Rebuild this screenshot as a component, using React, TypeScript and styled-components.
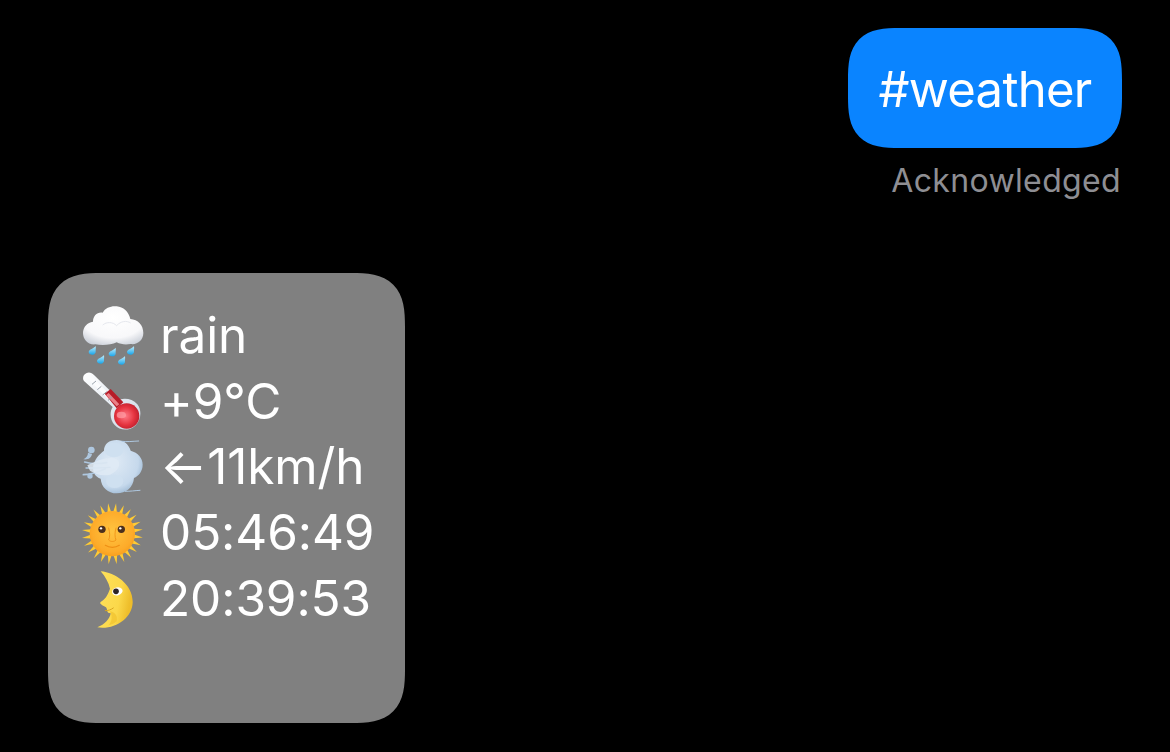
import React from "react";
import styled, { createGlobalStyle } from "styled-components";

const Global = createGlobalStyle`
  html, body { margin: 0; padding: 0; background: #000; }
  body { font-family: Inter, "Liberation Sans", sans-serif; }
`;

const Page = styled.main`
  width: 1170px;
  height: 752px;
  box-sizing: border-box;
  padding: 28px 48px 0;
  display: flex;
  flex-direction: column;
  background: #000;
  overflow: hidden;
`;

const Sent = styled.section`
  display: flex;
  flex-direction: column;
  align-items: flex-end;
`;

const SentBubble = styled.div`
  width: 274px;
  height: 120px;
  box-sizing: border-box;
  padding-top: 3px;
  display: flex;
  align-items: center;
  justify-content: center;
  background: #0a84ff;
  border-radius: 52px;
  corner-shape: superellipse(1.5);
  color: #fff;
  font-size: 49px;
  font-weight: 375;
  letter-spacing: -0.75px;
  line-height: 1;
`;

const Status = styled.div`
  margin-top: 14px;
  padding-right: 1px;
  color: #8e8e93;
  font-size: 32px;
  font-weight: 375;
  line-height: 38px;
  letter-spacing: 0.35px;
`;

const Received = styled.section`
  margin-top: 73px;
  width: 357px;
  height: 450px;
  box-sizing: border-box;
  padding: 30px 0 0 34px;
  background: #808080;
  border-radius: 54px;
  corner-shape: superellipse(1.5);
`;

const Row = styled.div`
  height: 65.7px;
  display: flex;
  align-items: center;
  gap: 18px;
  color: #fff;
  font-size: 49.5px;
  font-weight: 375;
  letter-spacing: -0.1px;
  white-space: nowrap;
`;

const Label = styled.span`
  margin-left: -2px;
  position: relative;
  top: -1px;
`;

const Glyph = styled.svg`
  width: 62px;
  height: 62px;
  flex: none;
  filter: blur(0.35px);
`;

const RainCloud = () => (
  <Glyph viewBox="0 0 186 186">
    <defs>
      <radialGradient id="cl" cx="0.5" cy="0.3" r="0.8">
        <stop offset="0" stopColor="#ffffff" />
        <stop offset="0.65" stopColor="#f8f8fa" />
        <stop offset="1" stopColor="#c3c9d3" />
      </radialGradient>
      <linearGradient id="dr" x1="0" y1="0" x2="0" y2="1">
        <stop offset="0" stopColor="#c4effc" />
        <stop offset="1" stopColor="#1aa6ea" />
      </linearGradient>
    </defs>
    <path
      fill="url(#cl)"
      d="M40 118C16 120 3 102 3 84C3 66 16 52 33 50C33 32 46 20 62 23C70 8 88 2 104 4C124 6 140 20 145 42C168 44 184 60 184 84C184 106 166 120 146 117C130 120 116 118 104 112C88 120 60 122 40 118Z"
    />
    <path fill="none" stroke="#e6e8ee" strokeWidth="3" d="M62 60C74 50 92 50 104 62M104 62C116 48 134 46 146 54" />
    {[
      [31, 136],
      [91, 141],
      [146, 136],
      [56, 163],
      [119, 166],
    ].map(([x, y]) => (
      <path
        key={`${x}-${y}`}
        fill="url(#dr)"
        transform={`translate(${x} ${y})`}
        d="M10 -13C6 -7 -11 -2 -11 5C-11 11 -5 13 0 13C7 13 11 8 10 2C10 -3 11 -7 10 -13Z"
      />
    ))}
  </Glyph>
);

const Thermometer = () => (
  <Glyph viewBox="0 0 186 186">
    <defs>
      <radialGradient id="bulb" cx="0.45" cy="0.5" r="0.6">
        <stop offset="0" stopColor="#ff7a86" />
        <stop offset="0.6" stopColor="#e5333f" />
        <stop offset="1" stopColor="#b71c2a" />
      </radialGradient>
      <linearGradient id="glass" x1="0" y1="0" x2="1" y2="1">
        <stop offset="0" stopColor="#ffffff" />
        <stop offset="1" stopColor="#cbd7e4" />
      </linearGradient>
    </defs>
    <path
      fill="url(#glass)"
      d="M6 30C0 22 4 10 14 6C22 2 30 6 36 12L112 86C130 80 152 84 166 100C180 118 178 146 160 164C142 180 114 180 98 162C84 146 82 124 92 108Z"
    />
    <path fill="#fbfcfd" d="M16 20C14 14 22 8 28 14L96 84L86 92Z" />
    <path fill="#b71c28" d="M68 68L86 54L124 94L104 112Z" />
    <path fill="#ea8088" d="M72 72L80 66L112 100L104 106Z" />
    <circle cx="134" cy="135" r="38" fill="url(#bulb)" />
    <g stroke="#9aa3ad" strokeWidth="3">
      <path d="M30 40L42 30M46 56L58 46M62 72L74 62M78 88L90 78" />
    </g>
    <ellipse cx="118" cy="132" rx="14" ry="10" fill="#ff9ea6" opacity="0.7" />
  </Glyph>
);

const WindFace = () => (
  <Glyph viewBox="0 0 186 186">
    <defs>
      <radialGradient id="puff" cx="0.42" cy="0.4" r="0.7">
        <stop offset="0" stopColor="#dfeaf5" />
        <stop offset="0.7" stopColor="#c6d9ec" />
        <stop offset="1" stopColor="#8dacca" />
      </radialGradient>
    </defs>
    <path
      fill="url(#puff)"
      d="M66 44C66 24 82 12 104 12C124 12 140 24 146 44C168 50 182 66 182 86C182 106 170 120 156 126C154 154 132 172 104 172C78 172 58 154 56 128C40 124 30 108 34 88C38 70 50 56 66 44Z"
    />
    <g fill="none" stroke="#aec7df" strokeLinecap="round">
      <path strokeWidth="5" d="M8 78C30 84 50 84 74 80" />
      <path strokeWidth="5" d="M4 116C30 116 48 108 70 98" />
      <path strokeWidth="4" d="M12 96C36 96 56 96 84 94" />
      <path strokeWidth="3" d="M120 16C136 18 150 16 170 15" />
      <path strokeWidth="3" d="M130 166C146 166 156 164 174 163" />
    </g>
    <g fill="#aec7df">
      <circle cx="28" cy="42" r="10" />
      <path d="M4 70C12 66 18 60 18 50L30 54C28 66 18 72 4 70Z" />
      <circle cx="24" cy="120" r="8" />
    </g>
    <path fill="#dfeaf4" opacity="0.85" d="M16 88C50 72 80 60 104 70C120 80 110 106 84 116C60 122 40 114 24 104Z" />
    <ellipse cx="96" cy="42" rx="28" ry="22" fill="#cfe0f0" />
    <ellipse cx="98" cy="136" rx="26" ry="20" fill="#cfe0f0" />
  </Glyph>
);

const rays = Array.from({ length: 24 }, (_, i) => i * 15);

const Sun = () => (
  <Glyph viewBox="0 0 186 186">
    <defs>
      <radialGradient id="sunface" cx="0.5" cy="0.45" r="0.6">
        <stop offset="0" stopColor="#ffc440" />
        <stop offset="0.75" stopColor="#fdab2a" />
        <stop offset="1" stopColor="#f69a18" />
      </radialGradient>
    </defs>
    <g fill="#ffcb33">
      {rays.map((a) => (
        <path key={a} transform={`rotate(${a + 7} 91 95)`} d="M85.5 30L91 3L96.5 30Z" />
      ))}
    </g>
    <circle cx="91" cy="95" r="68" fill="url(#sunface)" />
    <g fill="#4b2f1d">
      <circle cx="60" cy="82" r="11" />
      <circle cx="118" cy="82" r="11" />
    </g>
    <g fill="#fff">
      <circle cx="57" cy="79" r="3.5" />
      <circle cx="115" cy="79" r="3.5" />
    </g>
    <g fill="none" stroke="#ee8f14" strokeLinecap="round">
      <path strokeWidth="2.5" d="M80 78C84 92 84 106 80 114C86 120 96 120 102 114C98 106 98 90 102 78" />
      <path strokeWidth="3.5" d="M70 130C82 138 100 138 112 130" />
    </g>
  </Glyph>
);

const Moon = () => (
  <Glyph viewBox="0 0 186 186">
    <defs>
      <linearGradient id="moonfill" x1="0" y1="0" x2="1" y2="0.3">
        <stop offset="0" stopColor="#ffe25c" />
        <stop offset="0.7" stopColor="#fbd84a" />
        <stop offset="1" stopColor="#eebd2a" />
      </linearGradient>
    </defs>
    <path
      fill="url(#moonfill)"
      d="M56 10C100 14 154 50 152 104C150 150 100 186 46 178C68 170 84 152 86 136C72 136 78 126 72 118C64 112 50 108 56 102C68 94 76 86 84 62C80 44 70 26 56 10Z"
    />
    <path fill="#f1c22e" d="M84 130C100 134 108 144 104 160C98 166 90 170 80 172C90 160 92 146 84 130Z" opacity="0.7" />
    <ellipse cx="106" cy="70" rx="16" ry="12" fill="#fff" transform="rotate(-15 106 70)" />
    <circle cx="102" cy="70" r="8.5" fill="#2c2326" />
    <path fill="none" stroke="#d9a51f" strokeWidth="3" strokeLinecap="round" d="M70 128C78 128 86 126 94 120" />
  </Glyph>
);

const rows = [
  { icon: <RainCloud />, text: "rain" },
  { icon: <Thermometer />, text: "+9°C" },
  { icon: <WindFace />, text: "←11km/h" },
  { icon: <Sun />, text: "05:46:49" },
  { icon: <Moon />, text: "20:39:53" },
];

export default function App() {
  return (
    <Page>
      <Global />
      <Sent>
        <SentBubble>#weather</SentBubble>
        <Status>Acknowledged</Status>
      </Sent>
      <Received>
        {rows.map((r) => (
          <Row key={r.text}>
            {r.icon}
            <Label>{r.text}</Label>
          </Row>
        ))}
      </Received>
    </Page>
  );
}
